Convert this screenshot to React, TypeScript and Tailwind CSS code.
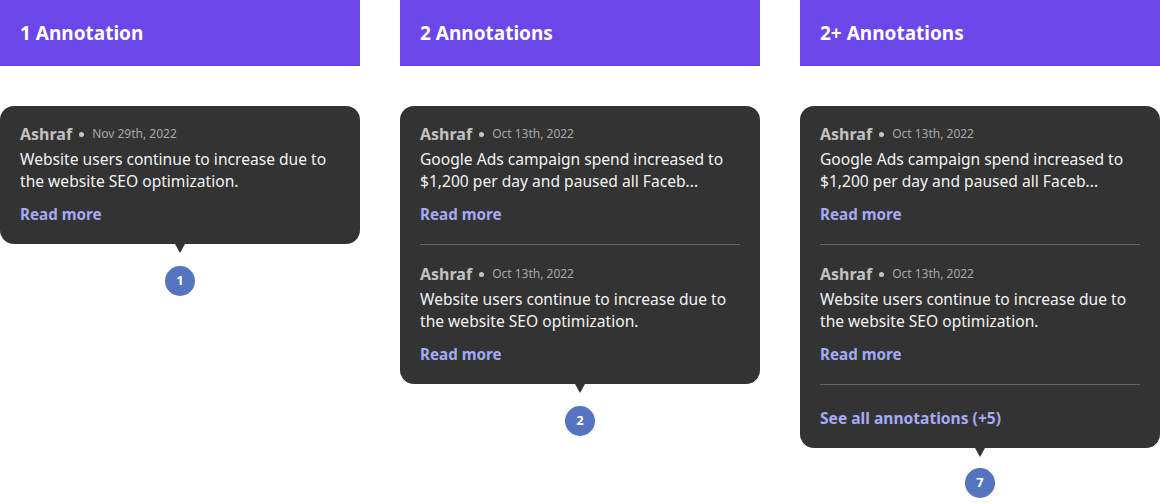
import React from "react";

type Item = { name: string; date: string; text: string[] };

const font = { fontFamily: '"Noto Sans", "Open Sans", sans-serif' };

function Entry({ item, first }: { item: Item; first: boolean }) {
  return (
    <div className={first ? "px-5 pt-5 pb-5" : "px-5 pt-[21px] pb-5"}>
      <div className="flex items-center h-4">
        <span className="text-[16px] font-bold text-[#c2c2c2] leading-4">{item.name}</span>
        <span className="ml-[7px] mr-[8px] w-[5px] h-[5px] rounded-full bg-[#c2c2c2]" />
        <span className="text-[12px] text-[#a8a8a8] leading-4">{item.date}</span>
      </div>
      <div className="mt-[6px] text-[15.6px] leading-[22px] text-[#f2f2f2]">
        {item.text.map((t, i) => (
          <div key={i} className="whitespace-nowrap">{t}</div>
        ))}
      </div>
      <div className="mt-[12px] text-[15.2px] font-bold leading-5 text-[#a5aaf2]">Read more</div>
    </div>
  );
}

function Column({ title, items, badge, seeAll }: { title: string; items: Item[]; badge: string; seeAll?: boolean }) {
  return (
    <div className="w-[360px] flex flex-col">
      <div className="h-[66px] bg-[#6b47ea] flex items-center px-5">
        <span className="text-[19px] font-bold text-white">{title}</span>
      </div>
      <div className="mt-10 flex flex-col items-center">
        <div className="w-full bg-[#333333] rounded-[14px]">
          {items.map((it, i) => (
            <React.Fragment key={i}>
              {i > 0 && <div className="mx-5 h-px bg-[#666666]" />}
              <Entry item={it} first={i === 0} />
            </React.Fragment>
          ))}
          {seeAll && (
            <>
              <div className="mx-5 h-px bg-[#666666]" />
              <div className="px-5 pt-[23px] pb-5 text-[15.6px] font-bold leading-5 text-[#a5aaf2] whitespace-nowrap">See all annotations (+5)</div>
            </>
          )}
        </div>
        <div className="w-0 h-0 border-l-[5px] border-r-[5px] border-t-[9px] border-l-transparent border-r-transparent border-t-[#333333]" />
        <div className={(seeAll ? "mt-[11px]" : "mt-[13px]") + " w-[30px] h-[30px] rounded-full bg-[#5573bf] flex items-center justify-center text-white text-[13px] font-bold"}>
          {badge}
        </div>
      </div>
    </div>
  );
}

const seo: Item = { name: "Ashraf", date: "Oct 13th, 2022", text: ["Website users continue to increase due to", "the website SEO optimization."] };
const ads: Item = { name: "Ashraf", date: "Oct 13th, 2022", text: ["Google Ads campaign spend increased to", "$1,200 per day and paused all Faceb..."] };

export default function App() {
  return (
    <div className="w-[1160px] h-[504px] bg-white flex gap-10" style={font}>
      <Column title="1 Annotation" items={[{ ...seo, date: "Nov 29th, 2022" }]} badge="1" />
      <Column title="2 Annotations" items={[ads, seo]} badge="2" />
      <Column title="2+ Annotations" items={[ads, seo]} badge="7" seeAll />
    </div>
  );
}
